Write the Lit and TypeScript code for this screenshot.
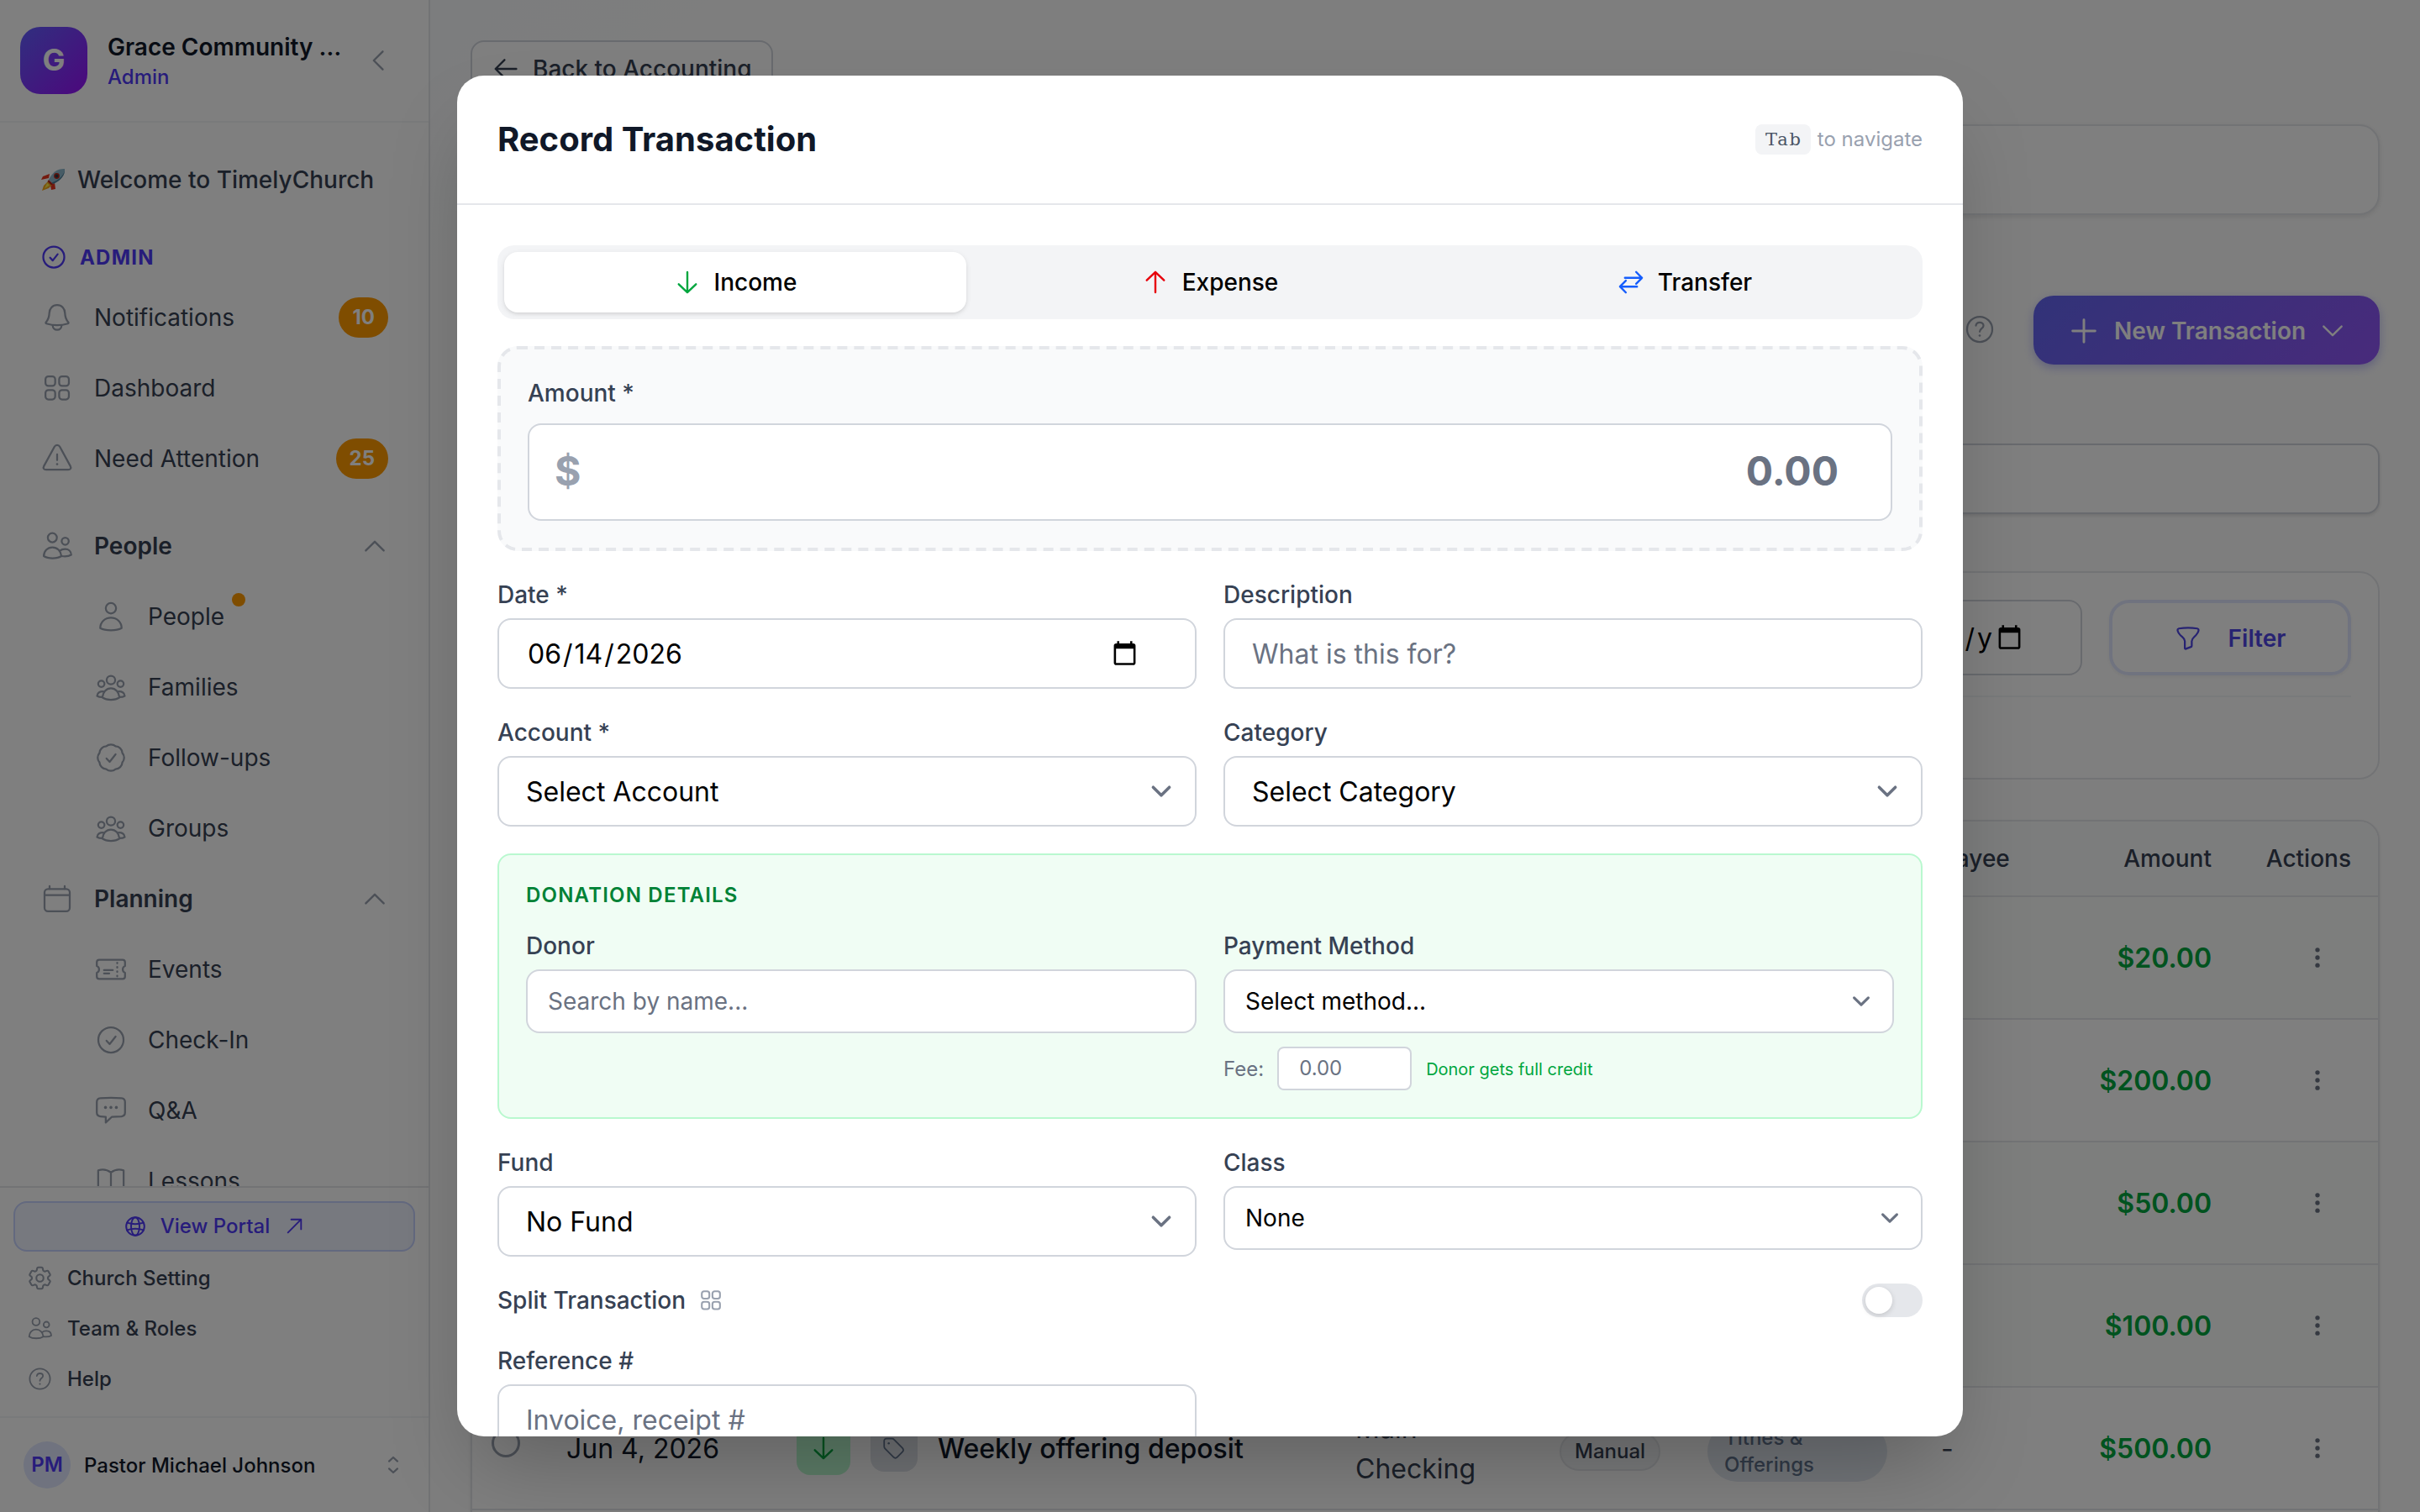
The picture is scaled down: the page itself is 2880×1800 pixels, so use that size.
import { LitElement, html, css, svg, nothing } from 'lit';
import { customElement } from 'lit/decorators.js';
import { classMap } from 'lit/directives/class-map.js';

// scalloped outline for the follow-ups badge
const sealPath = () => {
  const pts = Array.from({ length: 8 }, (_, i) => {
    const a = ((i * 45 + 22.5) * Math.PI) / 180;
    return `${(12 + 9.8 * Math.cos(a)).toFixed(2)} ${(12 + 9.8 * Math.sin(a)).toFixed(2)}`;
  });
  return `M${pts[7]}${pts.map((p) => `A5.6 5.6 0 0 1 ${p}`).join('')}z`;
};

const dot = (x: number, y: number, r = 1) =>
  svg`<circle cx=${x} cy=${y} r=${r} fill="currentColor" stroke="none" />`;

const ICONS: Record<string, unknown> = {
  bell: svg`<path d="M12 2.100c-3.800 0-6.100 2.900-6.200 6.300-.1 3.400-.6 5-2.600 7.200-.4.5-.3 1 .3 1.200 5 1.600 12 1.600 17 0 .6-.2.7-.7.3-1.200-2-2.200-2.500-3.800-2.600-7.200C18.100 5 15.800 2.100 12 2.100z"/><path d="M8.500 18.300c0 2 1.400 3.500 3.500 3.500s3.500-1.500 3.500-3.500"/>`,
  grid: svg`<rect x="2.750" y="2.750" width="7.700" height="7.500" rx="2.300"/><rect x="13.600" y="2.750" width="7.700" height="7.500" rx="2.300"/><rect x="2.750" y="13.500" width="7.700" height="7.500" rx="2.300"/><rect x="13.600" y="13.500" width="7.700" height="7.500" rx="2.300"/>`,
  alert: svg`<path d="M9.900 2.500 1.500 17.900c-.9 1.700 0 2.900 1.700 2.900h17.600c1.700 0 2.600-1.200 1.700-2.900L14.100 2.500c-.9-1.700-3.300-1.700-4.200 0z"/><path d="M12 8.500v4.700"/>${dot(12, 16.4, 0.9)}`,
  people: svg`<circle cx="8.200" cy="5.400" r="3.600"/><circle cx="18.400" cy="8.200" r="2.800"/><path d="M1.400 20c.1-4 2.900-7 6.800-7s6.800 3 7.200 7c-3.400 2.300-10.600 2.300-14 0z"/><path d="M14.200 15.800c1-.9 2.400-1.400 4.100-1.400 2.800 0 4.800 1.800 4.900 4.600-1.800 1.100-5.200 1.400-7.900 1"/>`,
  person: svg`<circle cx="12" cy="5.400" r="4.100"/><path d="M3.500 21.200c0-4.600 3.600-8.300 8.500-8.300s8.500 3.700 8.500 8.300c-4 2.200-13 2.200-17 0z"/>`,
  group: svg`<circle cx="12" cy="6.400" r="3.400"/><circle cx="4.400" cy="9.400" r="2.500"/><circle cx="19.600" cy="9.400" r="2.500"/><path d="M5.200 20.200c.4-4.100 3.100-7.200 6.800-7.200s6.400 3.100 6.800 7.200c-3.400 2.400-10.200 2.400-13.600 0z"/><path d="M6.300 15.500c-3-.3-5.100 1-5.300 3.500 1.100.7 2.400.9 4 .9M17.700 15.500c3-.3 5.100 1 5.300 3.500-1.100.7-2.400.9-4 .9"/>`,
  seal: svg`<path d=${sealPath()} /><path d="M8.500 12.600l2.500 2.700 4.700-6"/>`,
  calendar: svg`<rect x="2" y="4.200" width="20" height="17.700" rx="2.700"/><path d="M2 9h20M6 1.900v2.200M18 1.900v2.200"/>`,
  ticket: svg`<path d="M2.700 4.400h18.600c1.100 0 1.900.8 1.900 1.900v3c-1.100.4-1.800 1.500-1.800 2.700s.7 2.300 1.800 2.700v3c0 1.100-.8 1.900-1.900 1.900H2.700C1.600 19.600.8 18.800.8 17.700v-3c1.100-.4 1.800-1.500 1.800-2.700S1.900 9.700.8 9.300v-3c0-1.100.8-1.900 1.900-1.900z"/><path d="M6.500 12.600h7M6.500 15.200h4.200M17 6.700v.5M17 10.100v.5M17 13.500v.5M17 17v.5"/>`,
  check: svg`<circle cx="12" cy="12" r="10"/><path d="M8.500 12.600l2.500 2.700 4.700-6"/>`,
  chat: svg`<path d="M3.600 2.300c5.500-.6 11.300-.6 16.800 0 1.600.2 2.800 1.400 2.800 3v8.400c0 1.600-1.200 2.800-2.800 3-2.600.2-4.800.3-7.600.3l-4.900 4.600V17c-1.500 0-2.900-.1-4.300-.3C2 16.500.8 15.300.8 13.700V5.300c0-1.600 1.200-2.800 2.800-3z"/>${dot(7.7, 9.6, 1.2)}${dot(12, 9.6, 1.2)}${dot(16.3, 9.6, 1.2)}`,
  book: svg`<path d="M12 5.300C9 3 5 2.600 1.900 3.600v16.200c3.100-1 7.100-.6 10.100 1.600V5.300zM12 5.300c3-2.300 7-2.700 10.100-1.700v16.200c-3.100-1-7.100-.6-10.100 1.600"/>`,
  gear: svg`<g transform="translate(-2 -2) scale(1.167)"><path d="M9.594 3.940c.09-.542.56-.94 1.110-.94h2.593c.55 0 1.020.398 1.110.94l.213 1.281c.063.374.313.686.645.870.074.040.147.083.220.127.325.196.720.257 1.075.124l1.217-.456a1.125 1.125 0 0 1 1.370.490l1.296 2.247a1.125 1.125 0 0 1-.260 1.431l-1.003.827c-.293.241-.438.613-.430.992a7.723 7.723 0 0 1 0 .255c-.008.378.137.750.430.991l1.004.827c.424.350.534.955.260 1.430l-1.298 2.247a1.125 1.125 0 0 1-1.369.491l-1.217-.456c-.355-.133-.750-.072-1.076.124a6.470 6.470 0 0 1-.220.128c-.331.183-.581.495-.644.869l-.213 1.281c-.090.543-.560.940-1.110.940h-2.594c-.550 0-1.019-.398-1.110-.940l-.213-1.281c-.062-.374-.312-.686-.644-.870a6.520 6.520 0 0 1-.220-.127c-.325-.196-.720-.257-1.076-.124l-1.217.456a1.125 1.125 0 0 1-1.369-.490l-1.297-2.247a1.125 1.125 0 0 1 .260-1.431l1.004-.827c.292-.240.437-.613.430-.991a6.932 6.932 0 0 1 0-.255c.007-.380-.138-.751-.430-.992l-1.004-.827a1.125 1.125 0 0 1-.260-1.430l1.297-2.247a1.125 1.125 0 0 1 1.370-.491l1.216.456c.356.133.751.072 1.076-.124.072-.044.146-.086.220-.128.332-.183.582-.495.644-.869l.214-1.280Z"/><path d="M15 12a3 3 0 1 1-6 0 3 3 0 0 1 6 0Z"/></g>`,
  help: svg`<circle cx="12" cy="12" r="10"/><path d="M9 9.100c.2-1.600 1.300-2.500 3-2.500s3 1 3 2.500c0 2.300-3 2.400-3 4.800"/>${dot(12, 17, 0.9)}`,
  globe: svg`<circle cx="12" cy="12" r="10"/><ellipse cx="12" cy="12" rx="4.600" ry="10"/><path d="M3 8c5.400 1.700 12.600 1.700 18 0M3 16c5.400-1.700 12.600-1.700 18 0"/>`,
  external: svg`<path d="M4.500 19.500l15-15m0 0H8.250m11.250 0v11.250"/>`,
  down: svg`<path d="M12 3v18M4.300 13.700l7.700 7.400 7.700-7.400"/>`,
  up: svg`<path d="M12 21V3M4.300 10.300L12 2.900l7.700 7.400"/>`,
  left: svg`<path d="M21.300 12H3M10.800 4l-8 8 8 8"/>`,
  swap: svg`<path d="M6.600 8.100h15.200M16.600 2.800l5.200 5.300-5.200 5.300M17.400 15.900H2.200M7.400 10.600l-5.200 5.300 5.200 5.300"/>`,
  plus: svg`<path d="M12 2v20M2 12h20"/>`,
  chevronDown: svg`<path d="M4 7.900l8 8 8-8"/>`,
  chevronUp: svg`<path d="M4 16.100l8-8 8 8"/>`,
  chevronLeft: svg`<path d="M16.100 4l-8 8 8 8"/>`,
  sorter: svg`<path d="M7 7.600l5-4.600 5 4.600M7 16.400l5 4.600 5-4.600"/>`,
  funnel: svg`<path d="M3.200 2.600c5.600-1 12-1 17.600 0 .9.2 1.300.7 1.200 1.600-.2 2.600-1.600 4-4.200 6.400-1.600 1.500-2.300 2.400-2.300 4v4.300c0 .6-.2 1-.8 1.200L10 21.900c-.7.3-1.100 0-1.100-.8v-6.500c0-1.700-.7-2.600-2.500-4.100C3.600 8.200 2.200 6.800 2 4.200c-.1-.9.3-1.400 1.200-1.600z"/>`,
  tag: svg`<path d="M4.200 2.300h5.600c.9 0 1.700.3 2.300 1l8.500 8.600c1.200 1.200 1.200 2.700 0 3.900l-5.300 5.400c-1.200 1.200-2.700 1.200-3.900 0L2.900 12.600c-.6-.6-1-1.400-1-2.300V4.600c0-1.400.9-2.300 2.300-2.300z"/>${dot(6.6, 7, 1.1)}`,
  dots: svg`${dot(12, 5.1, 2)}${dot(12, 12, 2)}${dot(12, 18.9, 2)}`,
};

const icon = (name: string, size = 36, cls = '') => html`
  <svg class="icon ${cls}" width=${size} height=${size} viewBox="0 0 24 24">${ICONS[name]}</svg>
`;

const datePicker = html`
  <svg class="picker" width="31" height="31" viewBox="0 0 24 24">
    <path d="M20 3h-1V1h-2v2H7V1H5v2H4c-1.100 0-2 .9-2 2v16c0 1.100.9 2 2 2h16c1.100 0 2-.9 2-2V5c0-1.100-.9-2-2-2zm0 18H4V8h16v13z" />
  </svg>
`;

const shared = css`
  *,
  *::before {
    box-sizing: border-box;
  }

  .icon {
    display: block;
    flex: none;
    overflow: visible;
    fill: none;
    stroke: currentColor;
    stroke-width: 1.5;
    stroke-linecap: round;
    stroke-linejoin: round;
  }

  .icon.bold {
    stroke-width: 1.8;
  }

  .icon.heavy {
    stroke-width: 2.2;
  }

  .picker {
    display: block;
    flex: none;
    margin-bottom: 1px;
    fill: #000;
  }
`;

interface NavItem {
  label: string;
  icon: string;
  kind?: 'section' | 'sub';
  badge?: string;
  alert?: boolean;
}

const NAV: NavItem[] = [
  { label: 'Notifications', icon: 'bell', badge: '10' },
  { label: 'Dashboard', icon: 'grid' },
  { label: 'Need Attention', icon: 'alert', badge: '25' },
];

const GROUPS: NavItem[] = [
  { label: 'People', icon: 'people', kind: 'section' },
  { label: 'People', icon: 'person', kind: 'sub', alert: true },
  { label: 'Families', icon: 'group', kind: 'sub' },
  { label: 'Follow-ups', icon: 'seal', kind: 'sub' },
  { label: 'Groups', icon: 'group', kind: 'sub' },
  { label: 'Planning', icon: 'calendar', kind: 'section' },
  { label: 'Events', icon: 'ticket', kind: 'sub' },
  { label: 'Check-In', icon: 'check', kind: 'sub' },
  { label: 'Q&A', icon: 'chat', kind: 'sub' },
  { label: 'Lessons', icon: 'book', kind: 'sub' },
];

@customElement('app-sidebar')
export class AppSidebar extends LitElement {
  static styles = [
    shared,
    css`
      :host {
        display: flex;
        flex-direction: column;
        flex: none;
        width: 512px;
        height: 1800px;
        background: #fff;
        border-right: 2px solid #e5e7eb;
        box-sizing: border-box;
        color: #364153;
      }

      .head {
        display: flex;
        align-items: center;
        flex: none;
        height: 146px;
        padding: 0 44px 0 24px;
        border-bottom: 2px solid #f3f4f6;
      }

      .logo {
        display: flex;
        align-items: center;
        justify-content: center;
        width: 80px;
        height: 80px;
        padding-bottom: 2px;
        border-radius: 24px;
        background: linear-gradient(135deg, #615fff, #9810fa);
        color: #fff;
        font-size: 36px;
        font-weight: 700;
      }

      .org {
        flex: 1;
        margin-left: 24px;
        padding-top: 4px;
      }

      .org-name {
        color: #101828;
        font-size: 28px;
        font-weight: 600;
        line-height: 36px;
        white-space: nowrap;
      }

      .org-role {
        color: #4f39f6;
        font-size: 24px;
        font-weight: 500;
        line-height: 36px;
      }

      .muted {
        color: #99a1af;
      }

      nav {
        flex: 1;
        min-height: 0;
        overflow: hidden;
        padding-top: 26px;
      }

      .welcome {
        display: flex;
        align-items: center;
        gap: 14px;
        height: 84px;
        padding-left: 48px;
        font-size: 28px;
        font-weight: 500;
      }

      .admin {
        display: flex;
        align-items: center;
        gap: 16px;
        height: 40px;
        margin: 30px 0 10px;
        padding-left: 49px;
        color: #4f39f6;
        font-size: 24px;
        font-weight: 700;
        letter-spacing: 1.2px;
      }

      .item {
        display: flex;
        align-items: center;
        height: 84px;
        padding: 0 48px 0 50px;
        font-size: 28px;
      }

      .item .icon {
        margin-right: 26px;
        color: #99a1af;
      }

      .item .toggle {
        margin-right: 0;
      }

      .item.section {
        font-weight: 600;
      }

      .item.sub {
        padding-left: 114px;
      }

      .groups {
        margin-top: 20px;
      }

      .label {
        flex: 1;
      }

      .sub .label {
        flex: none;
      }

      .alert {
        align-self: flex-start;
        width: 16px;
        height: 16px;
        margin: 14px 0 0 9px;
        border-radius: 50%;
        background: #fe9a00;
      }

      .badge {
        height: 48px;
        padding: 0 16px;
        border-radius: 24px;
        background: #fe9a00;
        color: #fff;
        font-size: 24px;
        font-weight: 700;
        line-height: 48px;
      }

      .foot {
        flex: none;
        height: 274px;
        padding: 16px 16px 0;
        border-top: 2px solid #e5e7eb;
        font-size: 24px;
        font-weight: 500;
      }

      .portal {
        display: flex;
        align-items: center;
        justify-content: center;
        gap: 17px;
        height: 60px;
        margin-bottom: 1px;
        padding: 0 0 1px 1px;
        border: 2px solid #c6d2ff;
        border-radius: 16px;
        background: #eef2ff;
        color: #4f39f6;
      }

      .link {
        display: flex;
        align-items: center;
        gap: 18px;
        height: 60px;
        padding-left: 17px;
      }

      .link .icon {
        color: #99a1af;
      }

      .user {
        display: flex;
        align-items: center;
        flex: none;
        height: 114px;
        padding: 0 30px 0 28px;
        border-top: 2px solid #f3f4f6;
        color: #101828;
        font-size: 24px;
        font-weight: 500;
      }

      .initials {
        width: 56px;
        height: 56px;
        margin-right: 16px;
        border-radius: 50%;
        background: #e0e7ff;
        color: #4f39f6;
        font-weight: 600;
        line-height: 56px;
        text-align: center;
      }
    `,
  ];

  renderItem(item: NavItem) {
    return html`
      <div class=${classMap({ item: true, section: item.kind === 'section', sub: item.kind === 'sub' })}>
        ${icon(item.icon)}
        <span class="label">${item.label}</span>
        ${item.badge ? html`<span class="badge">${item.badge}</span>` : nothing}
        ${item.alert ? html`<span class="alert"></span>` : nothing}
        ${item.kind === 'section' ? icon('chevronUp', 32, 'toggle bold') : nothing}
      </div>
    `;
  }

  render() {
    return html`
      <div class="head">
        <div class="logo">G</div>
        <div class="org">
          <div class="org-name">Grace Community …</div>
          <div class="org-role">Admin</div>
        </div>
        <span class="muted">${icon('chevronLeft', 32, 'bold')}</span>
      </div>
      <nav>
        <div class="welcome">
          <svg width="30" height="28" viewBox="0 0 30 28">
            <path d="M10 12 1 14l2-4 8-3z" fill="#e8351f" />
            <path d="M17 17l1 8-5 1-1-6z" fill="#e8351f" />
            <path d="M9 16l5 4-4 4-8 3 2-6z" fill="#f7a81b" />
            <path d="M8 18l3 2.500-6 4z" fill="#fff04d" />
            <path d="M29 1c-8-.5-15 4-19 13l5 5C24 15 29.500 9 29 1z" fill="#8fb9cc" />
            <path d="M29 1c0 7-6 13-15.500 16.500L15 19C24 15 29.500 9 29 1z" fill="#4d7f99" />
            <path d="M10 14l5 5-2 1.500L8.500 16z" fill="#b5261b" />
            <circle cx="19.500" cy="9.500" r="3.400" fill="#b5261b" />
            <circle cx="19.500" cy="9.500" r="1.900" fill="#2a3b47" />
          </svg>
          Welcome to TimelyChurch
        </div>
        <div class="admin">${icon('check', 30, 'bold')}ADMIN</div>
        ${NAV.map((item) => this.renderItem(item))}
        <div class="groups">${GROUPS.map((item) => this.renderItem(item))}</div>
      </nav>
      <div class="foot">
        <div class="portal">${icon('globe', 26, 'bold')}View Portal${icon('external', 25, 'bold')}</div>
        <div class="link">${icon('gear', 29)}Church Setting</div>
        <div class="link">${icon('people', 29)}Team &amp; Roles</div>
        <div class="link">${icon('help', 29)}Help</div>
      </div>
      <div class="user">
        <div class="initials">PM</div>
        <span class="label">Pastor Michael Johnson</span>
        <span class="muted">${icon('sorter', 24, 'heavy')}</span>
      </div>
    `;
  }
}

const AMOUNTS = ['$20.00', '$200.00', '$50.00', '$100.00'];

@customElement('accounting-page')
export class AccountingPage extends LitElement {
  static styles = [
    shared,
    css`
      :host {
        display: flex;
        flex-direction: column;
        flex: 1;
        height: 1800px;
        padding: 48px 48px 0;
        overflow: hidden;
        background: linear-gradient(135deg, #f8fafc, #fdfdfd 10%);
        box-sizing: border-box;
        color: #364153;
        font-size: 28px;
      }

      .back {
        display: flex;
        align-items: center;
        align-self: flex-start;
        flex: none;
        gap: 16px;
        height: 68px;
        width: 360px;
        padding-left: 24px;
        border: 2px solid #d1d5dc;
        border-radius: 16px;
        background: #fff;
        font-weight: 500;
      }

      .card {
        flex: none;
        border: 2px solid #e5e7eb;
        border-radius: 24px;
        background: #fff;
      }

      .notice {
        height: 108px;
        margin-top: 32px;
        box-shadow: 0 2px 6px rgba(0, 0, 0, 0.1);
      }

      .actions {
        display: flex;
        align-items: center;
        justify-content: flex-end;
        gap: 46px;
        flex: none;
        height: 82px;
        margin-top: 96px;
      }

      .actions .hint {
        padding-bottom: 2px;
        color: #99a1af;
      }

      .new {
        display: flex;
        align-items: center;
        width: 412px;
        height: 82px;
        padding: 1px 40px 0 44px;
        border-radius: 24px;
        background: linear-gradient(135deg, #6366f1, #9155f7);
        box-shadow: 0 4px 12px rgba(99, 102, 241, 0.4);
        color: #fff;
        font-weight: 600;
      }

      .new span {
        flex: 1;
        margin-left: 20px;
      }

      .search {
        height: 84px;
        margin-top: 94px;
        border-color: #d1d5dc;
        border-radius: 16px;
        box-shadow: 0 2px 4px rgba(0, 0, 0, 0.12);
      }

      .filters {
        height: 248px;
        margin-top: 68px;
        padding: 32px;
      }

      .filter-row {
        display: flex;
        justify-content: flex-end;
        gap: 32px;
        height: 116px;
        border-bottom: 2px solid #f3f4f6;
      }

      .date {
        display: flex;
        align-items: center;
        justify-content: flex-end;
        gap: 2px;
        width: 500px;
        height: 90px;
        padding-right: 69px;
        border: 2px solid #d1d5dc;
        border-radius: 16px;
        color: #000;
        font-size: 32px;
        letter-spacing: 3px;
      }

      .filter {
        display: flex;
        align-items: center;
        justify-content: center;
        gap: 33px;
        width: 288px;
        height: 90px;
        padding: 1px 0 0 1px;
        border: 4px solid #e0e7ff;
        border-radius: 24px;
        box-shadow: 0 2px 4px rgba(0, 0, 0, 0.05);
        color: #4f46e5;
        font-weight: 600;
      }

      .table {
        height: 900px;
        margin-top: 48px;
        overflow: hidden;
        box-shadow: 0 2px 4px rgba(0, 0, 0, 0.08);
      }

      .row {
        display: grid;
        grid-template-columns: 112px 273px 169px 497px 243px 176px 278px 129px 193px 166px;
        align-items: center;
        height: 146px;
        border-bottom: 2px solid #e5e7eb;
        font-size: 32px;
      }

      .row.header {
        height: 90px;
        background: #f9fafb;
        font-size: 28px;
        font-weight: 500;
      }

      .row.tint {
        background: #fafcfb;
      }

      .payee {
        grid-column: 8;
      }

      .amount {
        grid-column: 9;
        text-align: right;
      }

      .row:not(.header) .amount {
        color: #00a63e;
        font-weight: 600;
      }

      .menu {
        grid-column: 10;
        display: flex;
        justify-content: flex-end;
      }

      .row:not(.header) .menu {
        padding-right: 24px;
        color: #6a7282;
      }

      .radio {
        width: 34px;
        height: 34px;
        margin: -12px 0 0 23px;
        border: 3px solid #99a1af;
        border-radius: 50%;
      }

      .dark {
        color: #101828;
      }

      .strong {
        color: #101828;
        font-weight: 500;
      }

      .kinds {
        display: flex;
        align-items: center;
        gap: 24px;
        margin-left: 1px;
      }

      .kind {
        display: flex;
        align-items: center;
        justify-content: center;
        width: 64px;
        height: 64px;
        border-radius: 16px;
        background: #b9f8cf;
        color: #00a63e;
      }

      .kind.tag {
        width: 56px;
        height: 56px;
        background: #dfe2e8;
        color: #62748e;
      }

      .account {
        width: 160px;
        padding-top: 1px;
        line-height: 48px;
      }

      .pill {
        justify-self: start;
        height: 46px;
        margin-top: 8px;
        padding: 0 16px;
        border: 2px solid #e5e7eb;
        border-radius: 24px;
        background: #f3f4f6;
        font-size: 24px;
        font-weight: 500;
        line-height: 42px;
      }

      .category {
        width: 214px;
        margin-top: 8px;
        padding: 4px 20px;
        border-radius: 36px;
        background: #e2e8f0;
        color: #62748e;
        font-size: 24px;
        font-weight: 500;
        line-height: 32px;
      }
    `,
  ];

  render() {
    return html`
      <div class="back">${icon('left', 32, 'bold')}Back to Accounting</div>
      <div class="card notice"></div>
      <div class="actions">
        <span class="hint">${icon('help', 36)}</span>
        <div class="new">
          ${icon('plus', 32, 'heavy')}
          <span>New Transaction</span>
          ${icon('chevronDown', 32, 'bold')}
        </div>
      </div>
      <div class="card search"></div>
      <div class="card filters">
        <div class="filter-row">
          <div class="date">/y${datePicker}</div>
          <div class="filter">${icon('funnel', 30, 'bold')}Filter</div>
        </div>
      </div>
      <div class="card table">
        <div class="row header">
          <span class="payee">Payee</span>
          <span class="amount">Amount</span>
          <span class="menu">Actions</span>
        </div>
        ${AMOUNTS.map(
          (amount, i) => html`
            <div class=${classMap({ row: true, tint: i !== 1 })}>
              <span class="amount">${amount}</span>
              <span class="menu">${icon('dots', 32)}</span>
            </div>
          `
        )}
        <div class="row">
          <span class="radio"></span>
          <span class="dark">Jun 4, 2026</span>
          <span class="kinds">
            <span class="kind">${icon('down', 32, 'bold')}</span>
            <span class="kind tag">${icon('tag', 28)}</span>
          </span>
          <span class="strong">Weekly offering deposit</span>
          <span class="account">Main Checking</span>
          <span class="pill">Manual</span>
          <span class="category">Tithes &amp; Offerings</span>
          <span class="payee">-</span>
          <span class="amount">$500.00</span>
          <span class="menu">${icon('dots', 32)}</span>
        </div>
      </div>
    `;
  }
}

@customElement('transaction-dialog')
export class TransactionDialog extends LitElement {
  static styles = [
    shared,
    css`
      :host {
        display: flex;
        flex-direction: column;
        width: 1792px;
        height: 1620px;
        overflow: hidden;
        border-radius: 32px;
        background: #fff;
        box-shadow: 0 50px 100px -24px rgba(0, 0, 0, 0.25);
        color: #364153;
        font-size: 28px;
      }

      header {
        display: flex;
        align-items: center;
        justify-content: space-between;
        flex: none;
        height: 154px;
        padding: 0 48px;
        border-bottom: 2px solid #e5e7eb;
      }

      h2 {
        margin: 0;
        padding-bottom: 2px;
        color: #101828;
        font-size: 40px;
        font-weight: 700;
      }

      .hint {
        display: flex;
        align-items: center;
        gap: 8px;
        padding-bottom: 1px;
        color: #99a1af;
        font-size: 24px;
      }

      kbd {
        height: 36px;
        padding: 0 10px 0 12px;
        border-radius: 8px;
        background: #f3f4f6;
        color: #4a5565;
        font-family: 'DejaVu Serif', serif;
        font-size: 21px;
        letter-spacing: 1.8px;
        line-height: 37px;
      }

      .body {
        display: flex;
        flex-direction: column;
        gap: 32px;
        flex: 1;
        min-height: 0;
        overflow: hidden;
        padding: 48px 48px 0;
      }

      .body > * {
        flex: none;
      }

      .tabs {
        display: grid;
        grid-template-columns: repeat(3, 1fr);
        gap: 15px;
        height: 88px;
        padding: 8px;
        border-radius: 20px;
        background: #f3f4f6;
        color: #000;
        font-weight: 500;
      }

      .tab {
        display: flex;
        align-items: center;
        justify-content: center;
        gap: 16px;
        border-radius: 16px;
      }

      .tab.active {
        background: #fff;
        box-shadow: 0 2px 6px rgba(0, 0, 0, 0.1), 0 2px 4px -2px rgba(0, 0, 0, 0.1);
      }

      .green {
        color: #00a63e;
      }

      .red {
        color: #e7000b;
      }

      .blue {
        color: #155dfc;
      }

      .total {
        position: relative;
        padding: 36px;
        border-radius: 24px;
        background: #f9fafb;
      }

      /* thin borders get longer dashes, so draw at half size and scale up */
      .total::before {
        content: '';
        position: absolute;
        top: 0;
        left: 0;
        width: 50%;
        height: 50%;
        border: 2px dashed #e5e7eb;
        border-radius: 12px;
        transform: scale(2);
        transform-origin: 0 0;
        pointer-events: none;
      }

      label {
        display: block;
        font-weight: 500;
        line-height: 40px;
      }

      .control {
        display: flex;
        align-items: center;
        justify-content: space-between;
        height: 84px;
        margin-top: 8px;
        padding: 0 16px 0 32px;
        border: 2px solid #d1d5dc;
        border-radius: 16px;
        background: #fff;
        color: #000;
        font-size: 32px;
      }

      .control.small {
        height: 76px;
        padding-left: 24px;
        font-size: 28px;
      }

      .control.placeholder {
        color: #6a7282;
      }

      .control.money {
        height: 116px;
        margin-top: 16px;
        padding: 0 62px 3px 30px;
        color: #6a7282;
        font-size: 48px;
        font-weight: 700;
      }

      .control.calendar {
        padding: 0 68px 0 34px;
      }

      .slash {
        margin: 0 2px;
      }

      .currency {
        color: #99a1af;
      }

      .caret {
        width: 1.5em;
        height: 1.5em;
        fill: none;
        stroke: #6a7282;
        stroke-width: 1.5;
        stroke-linecap: round;
        stroke-linejoin: round;
      }

      .cols {
        display: grid;
        grid-template-columns: 1fr 1fr;
        align-items: start;
        gap: 32px;
      }

      .donation {
        padding: 32px;
        border: 2px solid #b9f8cf;
        border-radius: 16px;
        background: #f0fdf4;
      }

      .caption {
        margin-bottom: 24px;
        color: #008236;
        font-size: 24px;
        font-weight: 600;
        letter-spacing: 1.2px;
        line-height: 32px;
      }

      .fee {
        display: flex;
        align-items: center;
        gap: 16px;
        margin-top: 16px;
        color: #6a7282;
        font-size: 24px;
      }

      .fee-input {
        width: 160px;
        height: 52px;
        padding-left: 24px;
        border: 2px solid #d1d5dc;
        border-radius: 8px;
        background: #fff;
        line-height: 48px;
      }

      .credit {
        padding: 1px 0 0 1px;
        color: #00a63e;
        font-size: 20px;
      }

      .split {
        display: flex;
        align-items: center;
        gap: 16px;
        height: 40px;
        font-weight: 500;
      }

      .split .icon {
        color: #99a1af;
      }

      .switch {
        width: 72px;
        height: 40px;
        margin-left: auto;
        padding: 4px;
        border-radius: 20px;
        background: #e5e7eb;
      }

      .knob {
        width: 32px;
        height: 32px;
        border-radius: 50%;
        background: #fff;
        box-shadow: 0 2px 6px rgba(0, 0, 0, 0.15);
      }
    `,
  ];

  renderSelect(label: string, value: string, small = false) {
    return html`
      <div>
        <label>${label}</label>
        <div class=${classMap({ control: true, small })}>
          ${value}
          <svg class="caret" viewBox="0 0 20 20"><path d="M6 8l4 4 4-4" /></svg>
        </div>
      </div>
    `;
  }

  renderInput(label: string, placeholder: string, small = false) {
    return html`
      <div>
        <label>${label}</label>
        <div class=${classMap({ control: true, placeholder: true, small })}>${placeholder}</div>
      </div>
    `;
  }

  render() {
    return html`
      <header>
        <h2>Record Transaction</h2>
        <div class="hint"><kbd>Tab</kbd>to navigate</div>
      </header>
      <div class="body">
        <div class="tabs">
          <div class="tab active"><span class="green">${icon('down', 32, 'bold')}</span>Income</div>
          <div class="tab"><span class="red">${icon('up', 32, 'bold')}</span>Expense</div>
          <div class="tab"><span class="blue">${icon('swap', 32, 'bold')}</span>Transfer</div>
        </div>
        <div class="total">
          <label>Amount *</label>
          <div class="control money"><span class="currency">$</span><span>0.00</span></div>
        </div>
        <div class="cols">
          <div>
            <label>Date *</label>
            <div class="control calendar">
              <span>06<span class="slash">/</span>14<span class="slash">/</span>2026</span>
              ${datePicker}
            </div>
          </div>
          ${this.renderInput('Description', 'What is this for?')}
        </div>
        <div class="cols">
          ${this.renderSelect('Account *', 'Select Account')}
          ${this.renderSelect('Category', 'Select Category')}
        </div>
        <div class="donation">
          <div class="caption">DONATION DETAILS</div>
          <div class="cols">
            ${this.renderInput('Donor', 'Search by name...', true)}
            <div>
              ${this.renderSelect('Payment Method', 'Select method...', true)}
              <div class="fee">
                Fee:
                <div class="fee-input">0.00</div>
                <span class="credit">Donor gets full credit</span>
              </div>
            </div>
          </div>
        </div>
        <div class="cols">
          ${this.renderSelect('Fund', 'No Fund')}
          ${this.renderSelect('Class', 'None', true)}
        </div>
        <div class="split">
          Split Transaction ${icon('grid', 28, 'bold')}
          <div class="switch"><div class="knob"></div></div>
        </div>
        <div class="cols">${this.renderInput('Reference #', 'Invoice, receipt #')}</div>
      </div>
    `;
  }
}

@customElement('app-root')
export class AppRoot extends LitElement {
  static styles = css`
    :host {
      display: block;
      position: relative;
      width: 2880px;
      height: 1800px;
      overflow: hidden;
      font-family: Inter, 'Liberation Sans', sans-serif;
    }

    .shell {
      display: flex;
    }

    .overlay {
      position: absolute;
      inset: 0;
      display: flex;
      align-items: center;
      justify-content: center;
      background: rgba(0, 0, 0, 0.5);
    }
  `;

  render() {
    return html`
      <div class="shell">
        <app-sidebar></app-sidebar>
        <accounting-page></accounting-page>
      </div>
      <div class="overlay"><transaction-dialog></transaction-dialog></div>
    `;
  }
}
